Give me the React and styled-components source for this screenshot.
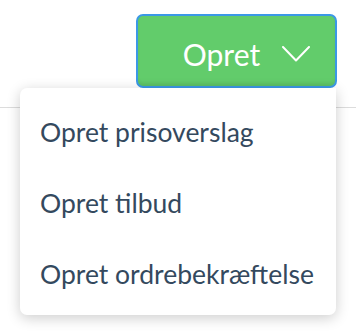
import React from "react";
import styled, { createGlobalStyle } from "styled-components";

const Global = createGlobalStyle`
  html, body { margin: 0; padding: 0; background: #ffffff; }
  body { font-family: Lato, "Open Sans", "Liberation Sans", sans-serif; }
`;

const Page = styled.div`
  position: relative;
  width: 356px;
  height: 332px;
  overflow: hidden;
  background: #ffffff;
`;

const Header = styled.header`
  height: 108px;
  box-sizing: border-box;
  border-bottom: 1px solid #dcdcdc;
  display: flex;
  justify-content: flex-end;
  align-items: flex-start;
  padding: 14px 19px 0 0;
`;

const CreateButton = styled.button`
  width: 201px;
  height: 74px;
  box-sizing: border-box;
  border: 2px solid #3b98e6;
  border-radius: 7px;
  background: #62cc6b;
  box-shadow: inset 0 -3px 3px rgba(0, 0, 0, 0.06);
  color: #ffffff;
  font-family: Lato, "Open Sans", sans-serif;
  font-size: 30px;
  font-weight: 400;
  display: flex;
  align-items: center;
  justify-content: center;
  gap: 22px;
  padding: 6px 0 0 20px;
  cursor: pointer;
`;

const Menu = styled.ul`
  position: absolute;
  top: 88px;
  left: 20px;
  width: 316px;
  margin: 0;
  padding: 8px 0 6px;
  list-style: none;
  background: #ffffff;
  border-radius: 7px 0 7px 7px;
  box-shadow: 0 3px 14px rgba(0, 0, 0, 0.2);
  box-sizing: border-box;
`;

const Item = styled.li`
  height: 71px;
  display: flex;
  align-items: center;
  padding-left: 20px;
  font-family: Lato, "Open Sans", sans-serif;
  font-size: 26.5px;
  color: #34495e;
  cursor: pointer;
`;

const Chevron = () => (
  <svg width="28" height="16" viewBox="0 0 28 16" fill="none">
    <polyline points="1,1 14,14.5 27,1" stroke="#ffffff" strokeWidth="2" strokeLinecap="round" strokeLinejoin="round" />
  </svg>
);

export default function App() {
  return (
    <Page>
      <Global />
      <Header>
        <CreateButton>
          <span>Opret</span>
          <Chevron />
        </CreateButton>
      </Header>
      <Menu>
        <Item>Opret prisoverslag</Item>
        <Item>Opret tilbud</Item>
        <Item>Opret ordrebekræftelse</Item>
      </Menu>
    </Page>
  );
}
